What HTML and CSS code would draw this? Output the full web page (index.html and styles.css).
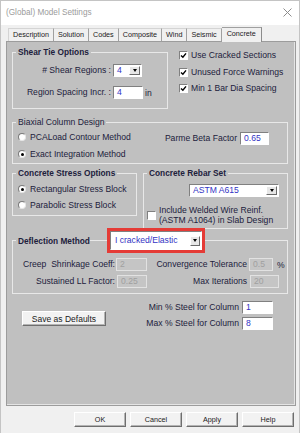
FILE: index.html
```html
<!DOCTYPE html>
<html lang="en">
<head>
    <meta charset="UTF-8">
    <meta name="viewport" content="width=device-width, initial-scale=1.0">
    <title>(Global) Model Settings</title>
    <link rel="stylesheet" href="styles.css">
</head>
<body>

<div class="window">
    <div class="titlebar">
        <span class="title">(Global) Model Settings</span>
        <svg class="close" width="9" height="9" viewBox="0 0 9 9">
            <path d="M0.5 0.5L8.5 8.5M8.5 0.5L0.5 8.5" stroke="#8c8c8c" stroke-width="1" fill="none"/>
        </svg>
    </div>

    <div class="tabs">
        <div class="tab">Description</div>
        <div class="tab">Solution</div>
        <div class="tab">Codes</div>
        <div class="tab">Composite</div>
        <div class="tab">Wind</div>
        <div class="tab">Seismic</div>
        <div class="tab active">Concrete</div>
    </div>

    <div class="page">
        <div class="top-row">
            <fieldset class="group shear">
                <legend>Shear Tie Options</legend>
                <div class="shear-grid">
                    <label># Shear Regions :</label>
                    <div class="select shear-select"><span>4</span><span class="drop"></span></div>
                    <span></span>
                    <label>Region Spacing Incr. :</label>
                    <div class="field w30">4</div>
                    <span class="unit">in</span>
                </div>
            </fieldset>

            <div class="checks">
                <div class="check">
                    <span class="box"><svg width="7" height="7" viewBox="0 0 7 7"><path d="M1 3.4L2.9 5.3L6 1.4" stroke="#000" stroke-width="1.4" fill="none"/></svg></span>
                    Use Cracked Sections
                </div>
                <div class="check">
                    <span class="box"><svg width="7" height="7" viewBox="0 0 7 7"><path d="M1 3.4L2.9 5.3L6 1.4" stroke="#000" stroke-width="1.4" fill="none"/></svg></span>
                    Unused Force Warnings
                </div>
                <div class="check">
                    <span class="box"><svg width="7" height="7" viewBox="0 0 7 7"><path d="M1 3.4L2.9 5.3L6 1.4" stroke="#000" stroke-width="1.4" fill="none"/></svg></span>
                    Min 1 Bar Dia Spacing
                </div>
            </div>
        </div>

        <fieldset class="group biaxial">
            <legend class="plain">Biaxial Column Design</legend>
            <div class="biaxial-body">
                <div class="radios">
                    <div class="option"><span class="radio"></span>PCALoad Contour Method</div>
                    <div class="option"><span class="radio on"></span>Exact Integration Method</div>
                </div>
                <div class="beta">
                    <label>Parme Beta Factor</label>
                    <div class="field w29">0.65</div>
                </div>
            </div>
        </fieldset>

        <div class="mid-row">
            <fieldset class="group stress">
                <legend>Concrete Stress Options</legend>
                <div class="radios">
                    <div class="option"><span class="radio on"></span>Rectangular Stress Block</div>
                    <div class="option"><span class="radio"></span>Parabolic Stress Block</div>
                </div>
            </fieldset>

            <fieldset class="group rebar">
                <legend>Concrete Rebar Set</legend>
                <div class="select rebar-select"><span>ASTM A615</span><span class="drop"></span></div>
                <div class="check wwr">
                    <span class="box"></span>
                    <span>Include Welded Wire Reinf.<br>(ASTM A1064) in Slab Design</span>
                </div>
            </fieldset>
        </div>

        <fieldset class="group deflection">
            <legend class="with-select">
                <span>Deflection Method</span>
                <span class="legend-line"></span>
                <span class="highlight">
                    <span class="select defl-select"><span>I cracked/Elastic</span><span class="drop"></span></span>
                </span>
            </legend>
            <div class="defl-grid">
                <label>Creep&nbsp; Shrinkage Coeff:</label>
                <div class="field off w31 ml1">2</div>
                <label>Convergence Tolerance</label>
                <div class="cell"><div class="field off w24">0.5</div><span>%</span></div>

                <label>Sustained LL Factor:</label>
                <div class="field off w30 ml2">0.25</div>
                <label>Max Iterations</label>
                <div class="cell"><div class="field off w29 ml1">20</div></div>
            </div>
        </fieldset>

        <div class="bottom-row">
            <button class="btn save">Save as Defaults</button>
            <div class="steel">
                <div class="steel-row"><label>Min % Steel for Column</label><div class="field w31">1</div></div>
                <div class="steel-row"><label>Max % Steel for Column</label><div class="field w31">8</div></div>
            </div>
        </div>
    </div>

    <div class="actions">
        <button class="btn">OK</button>
        <button class="btn">Cancel</button>
        <button class="btn">Apply</button>
        <button class="btn">Help</button>
    </div>
</div>

</body>
</html>
```

FILE: styles.css
```css
* {
    box-sizing: border-box;
}

body {
    margin: 0;
    background: #fff;
    font-family: "Liberation Sans", Arial, sans-serif;
}

.window {
    width: 300px;
    height: 433px;
    background: #f0f0f0;
    border: 1px solid #c4c4c4;
    border-bottom: none;
    overflow: hidden;
}

/* barre de titre */
.titlebar {
    height: 24px;
    background: #fff;
    display: flex;
    align-items: center;
    justify-content: space-between;
    padding: 0 7px 2px 5px;
}

.title {
    font-size: 8.2px;
    color: #9b9b9b;
}

.close {
    display: block;
}

/* onglets */
.tabs {
    height: 16px;
    display: flex;
    align-items: flex-end;
    padding-left: 7px;
    position: relative;
    z-index: 1;
}

.tab {
    height: 13px;
    padding: 0 4px;
    font-size: 7.2px;
    line-height: 12px;
    color: #1a1a1a;
    border-top: 1px solid #d4d4d4;
    border-right: 1px solid #a0a0a0;
}

.tab:first-child {
    border-left: 1px solid #d4d4d4;
}

.tab.active {
    height: 15px;
    margin-bottom: -1px;
    padding: 0 5px;
    background: #f0f0f0;
    border-top: 1px solid #a0a0a0;
    border-right: 1px solid #8c8c8c;
}

/* page grise */
.page {
    margin-left: 5px;
    width: 290px;
    height: 365px;
    background: #c0c0c0;
    border: 1px solid #9c9c9c;
    box-shadow: inset -1px -1px 0 #e4e4e4;
    padding: 5px 7px 0 5px;
    font-size: 8.6px;
    color: #20203c;
}

.group {
    margin: 0;
    padding: 0;
    min-width: 0;
    border: 1px solid #e8e8e8;
}

.group legend {
    font-weight: bold;
    font-size: 8.3px;
    line-height: 10px;
    padding: 0 2px;
    margin-left: 3px;
}

.group legend.plain {
    font-weight: normal;
    font-size: 8.6px;
}

label {
    line-height: 13px;
    white-space: nowrap;
}

/* champs */
.field {
    height: 13px;
    background: #fff;
    border: 1px solid;
    border-color: #808080 #fff #fff #808080;
    color: #3333c4;
    padding-left: 3px;
    line-height: 11px;
}

.field.off {
    background: #c5c5c5;
    border-color: #e2e2e2;
    color: #a0a0a0;
}

.w24 { width: 24px; }
.w29 { width: 29px; }
.w30 { width: 30px; }
.w31 { width: 31px; }
.ml1 { margin-left: 1px; }
.ml2 { margin-left: 2px; }

.select {
    display: flex;
    align-items: center;
    justify-content: space-between;
    height: 13px;
    background: #fff;
    border: 1px solid;
    border-color: #808080 #fff #fff #808080;
    padding: 0 1px 0 3px;
    color: #3333c4;
    line-height: 11px;
}

.drop {
    width: 11px;
    height: 9px;
    background: #e6e6e6;
    border: 1px solid;
    border-color: #fff #6a6a6a #6a6a6a #fff;
    display: flex;
    align-items: center;
    justify-content: center;
}

.drop::after {
    content: '';
    border-left: 2.5px solid transparent;
    border-right: 2.5px solid transparent;
    border-top: 3px solid #000;
}

.check {
    display: flex;
    align-items: center;
    gap: 3px;
    height: 13px;
    line-height: 13px;
    white-space: nowrap;
}

.box {
    width: 9px;
    height: 9px;
    flex: none;
    background: #fff;
    border: 1px solid;
    border-color: #808080 #fff #fff #808080;
    display: flex;
}

.radios {
    display: flex;
    flex-direction: column;
    padding-left: 5px;
}

.option {
    display: flex;
    align-items: center;
    gap: 4px;
    height: 12px;
    line-height: 12px;
    white-space: nowrap;
}

.radio {
    width: 8px;
    height: 8px;
    flex: none;
    border-radius: 50%;
    background: #fff;
    border: 1px solid;
    border-color: #7a7a7a #e6e6e6 #e6e6e6 #7a7a7a;
    display: flex;
    align-items: center;
    justify-content: center;
}

.radio.on::after {
    content: '';
    width: 3px;
    height: 3px;
    border-radius: 50%;
    background: #000;
}

/* Shear Tie Options + cases */
.top-row {
    display: flex;
    align-items: flex-start;
}

.shear {
    width: 156px;
    padding-bottom: 9px;
}

.shear-grid {
    display: grid;
    grid-template-columns: 98px 30px auto;
    grid-auto-rows: 13px;
    column-gap: 2px;
    row-gap: 9px;
    align-items: center;
    margin-top: 7px;
}

.shear-grid label {
    text-align: right;
}

.shear-select {
    width: 29px;
}

.checks {
    margin-left: 11px;
    padding-top: 2px;
    display: flex;
    flex-direction: column;
    gap: 3.5px;
}

/* Biaxial */
.biaxial {
    width: 276px;
    margin-top: 8px;
    padding: 0 18px 3px 0;
}

.biaxial-body {
    display: flex;
    justify-content: space-between;
    align-items: flex-start;
}

.biaxial .radios {
    margin-top: 4px;
    gap: 5px;
}

.beta {
    display: flex;
    align-items: center;
    gap: 3px;
    margin-top: 5px;
}

/* Stress + Rebar */
.mid-row {
    display: flex;
    align-items: flex-start;
    gap: 6px;
    margin-top: 4px;
}

.stress {
    width: 125px;
    padding-bottom: 4px;
}

.stress .radios {
    margin-top: 5px;
    gap: 4px;
}

.rebar {
    width: 145px;
    padding-bottom: 3px;
}

.rebar-select {
    width: 90px;
    margin: 6px 0 0 45px;
}

.wwr {
    height: auto;
    line-height: 10px;
    margin: 8px 0 0 3px;
}

/* Deflection */
.deflection {
    width: 276px;
    margin-top: -1px;
    padding-bottom: 5px;
}

.group legend.with-select {
    display: flex;
    align-items: center;
    height: 25px;
    padding: 0 0 0 2px;
}

.legend-line {
    width: 17px;
    border-top: 1px solid #e8e8e8;
}

.highlight {
    width: 98px;
    height: 25px;
    border: 3px solid #e53b36;
    display: flex;
}

.defl-select {
    width: 92px;
    height: 19px;
    font-weight: normal;
    font-size: 8.6px;
    padding-left: 4px;
}

.defl-select .drop {
    width: 10px;
    height: 10px;
}

.defl-grid {
    display: grid;
    grid-template-columns: 102px 32px 100px 1fr;
    grid-auto-rows: 13px;
    row-gap: 4px;
    align-items: center;
    margin-top: 5px;
}

.defl-grid label {
    text-align: right;
}

.cell {
    display: flex;
    align-items: center;
    gap: 4px;
    padding-left: 2px;
}

/* bas de page */
.bottom-row {
    display: flex;
    align-items: flex-start;
}

.btn {
    font-family: "Liberation Sans", Arial, sans-serif;
    color: #1a1a1a;
    background: #f2f2f2;
    border: 1px solid;
    border-color: #fff #6e6e6e #6e6e6e #fff;
    box-shadow: inset -1px -1px 0 #b4b4b4;
    padding: 0;
    height: 15px;
}

.save {
    width: 84px;
    margin: 17px 0 0 10px;
    font-size: 8.5px;
}

.steel {
    margin: 7px 15px 0 auto;
    display: flex;
    flex-direction: column;
    gap: 3px;
}

.steel-row {
    display: flex;
    align-items: center;
    justify-content: flex-end;
    gap: 3px;
    height: 13px;
}

.actions {
    display: flex;
    justify-content: flex-end;
    gap: 4px;
    margin-top: 6px;
    padding-right: 5px;
}

.actions .btn {
    width: 52px;
    font-size: 7.2px;
}
```
